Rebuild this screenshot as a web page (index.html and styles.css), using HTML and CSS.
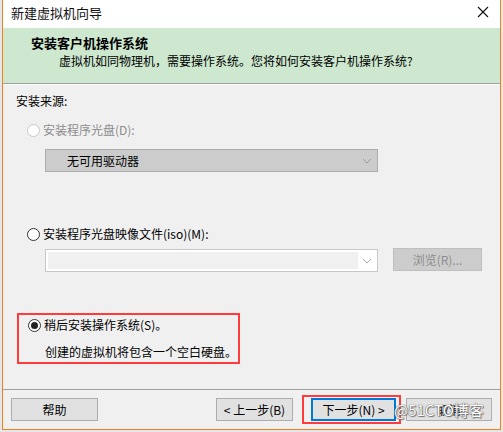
FILE: index.html
```html
<!DOCTYPE html>
<html lang="zh-CN">
<head>
    <meta charset="UTF-8">
    <title>新建虚拟机向导</title>
    <link rel="stylesheet" href="styles.css">
</head>
<body>
<div class="win">
    <div class="titlebar">
        <span class="title">新建虚拟机向导</span>
        <svg class="close" width="12" height="12" viewBox="0 0 12 12">
            <path d="M1 1L11 11M11 1L1 11" stroke="#111" stroke-width="1.1"/>
        </svg>
    </div>
    <div class="head">
        <div class="head-title">安装客户机操作系统</div>
        <div class="head-sub">虚拟机如同物理机，需要操作系统。您将如何安装客户机操作系统?</div>
    </div>
    <div class="main">
        <div class="label">安装来源:</div>

        <div class="opt off"><span class="radio"></span>安装程序光盘(D):</div>
        <div class="select off-select">
            <span>无可用驱动器</span>
            <svg class="chev" width="10" height="6" viewBox="0 0 10 6"><path d="M1 1L5 5L9 1" fill="none" stroke="#9a9a9a"/></svg>
        </div>

        <div class="opt opt-iso"><span class="radio"></span>安装程序光盘映像文件(iso)(M):</div>
        <div class="iso-row">
            <div class="select combo">
                <span class="edit"></span>
                <svg class="chev" width="10" height="6" viewBox="0 0 10 6"><path d="M1 1L5 5L9 1" fill="none" stroke="#a8a8a8"/></svg>
            </div>
            <div class="btn btn-off">浏览(R)...</div>
        </div>

        <div class="mark">
            <div class="opt on"><span class="radio checked"></span>稍后安装操作系统(S)。</div>
            <div class="note">创建的虚拟机将包含一个空白硬盘。</div>
        </div>
    </div>
    <div class="foot">
        <div class="btn help">帮助</div>
        <div class="btn back">&lt; 上一步(B)</div>
        <div class="next-mark"><div class="btn next">下一步(N) &gt;</div></div>
        <div class="cancel-wrap">
            <div class="btn cancel">取消</div>
            <span class="water">@51CTO博客</span>
        </div>
    </div>
</div>
</body>
</html>
```
FILE: styles.css
```css
body {
    margin: 0;
    background: #e6e6e6;
    font: 12px/16px "Noto Sans CJK SC", "Microsoft YaHei", sans-serif;
    color: #000;
}
.win {
    margin-left: 2px;
    width: 497px;
    height: 429px;
    border: 1px solid #f0811e;
    border-top: none;
    background: #f0f0f0;
    display: flex;
    flex-direction: column;
}
.titlebar {
    flex: none;
    height: 28px;
    background: #fff;
    display: flex;
    align-items: center;
    justify-content: space-between;
    padding: 0 10px 2px 8px;
    box-sizing: border-box;
}
.title {
    font-size: 13px;
    color: #111;
}
.close {
    margin: 0 1px 2px 0;
}
.head {
    flex: none;
    height: 56px;
    box-sizing: border-box;
    padding: 7px 0 0 28px;
    background: #cde8cf;
    border-bottom: 1px solid #a0a0a0;
}
.head-title {
    font-weight: bold;
    font-size: 13px;
}
.head-sub {
    margin-top: 2px;
    padding-left: 28px;
}
.main {
    flex: 1;
    padding: 8px 0 0 13px;
    border-top: 1px solid #fff;
}
.opt {
    display: flex;
    align-items: center;
    margin: 13px 0 0 11px;
    height: 16px;
}
.opt.off {
    color: #8c8c8c;
}
.radio {
    width: 11px;
    height: 11px;
    border: 1px solid #333;
    border-radius: 50%;
    background: #fff;
    margin-right: 3px;
    display: flex;
    align-items: center;
    justify-content: center;
}
.off .radio {
    border-color: #c8c8c8;
}
.radio.checked::after {
    content: "";
    width: 7px;
    height: 7px;
    border-radius: 50%;
    background: #222;
}
.select {
    margin: 11px 0 0 29px;
    width: 333px;
    height: 23px;
    box-sizing: border-box;
    display: flex;
    align-items: center;
    justify-content: space-between;
    padding: 0 5px 0 21px;
}
.off-select {
    background: #cccccc;
    border: 1px solid #adadad;
}
.opt-iso {
    margin-top: 54px;
}
.iso-row {
    display: flex;
    align-items: flex-start;
    margin-top: 7px;
}
.combo {
    margin-top: 0;
    background: #fff;
    border: 1px solid #c8c8c8;
    padding: 2px 5px 2px 2px;
}
.edit {
    width: 310px;
    height: 17px;
    background: #f0f0f0;
}
.btn {
    height: 23px;
    box-sizing: border-box;
    border: 1px solid #adadad;
    background: #e1e1e1;
    display: flex;
    align-items: center;
    justify-content: center;
}
.btn-off {
    margin-left: 15px;
    width: 89px;
    margin-top: -1px;
    background: #cccccc;
    border-color: #bfbfbf;
    color: #8c8c8c;
}
.mark {
    margin: 41px 0 0 1px;
    width: 223px;
    height: 51px;
    box-sizing: border-box;
    border: 2px solid #ff3c3c;
    padding-top: 2px;
}
.mark .opt {
    margin: 0 0 0 9px;
}
.note {
    margin: 11px 0 0 26px;
}
.foot {
    flex: none;
    height: 39px;
    border-top: 1px solid #a0a0a0;
    display: flex;
    align-items: center;
    padding: 0 0 0 8px;
}
.help {
    width: 87px;
}
.back {
    margin-left: 118px;
    width: 77px;
}
.next-mark {
    margin-left: 9px;
    border: 2px solid #ff3c3c;
    padding: 1px 3px 1px 7px;
}
.next {
    width: 85px;
    border: 2px solid #0078d7;
}
.cancel-wrap {
    position: relative;
    margin-left: 5px;
}
.cancel {
    width: 86px;
}
.water {
    position: absolute;
    left: -12px;
    top: 3px;
    font-size: 15px;
    line-height: 18px;
    color: #fff;
    white-space: nowrap;
    text-shadow: 0 0 1px #555, 0 0 1px #555, 1px 1px 1px #777;
}
```
